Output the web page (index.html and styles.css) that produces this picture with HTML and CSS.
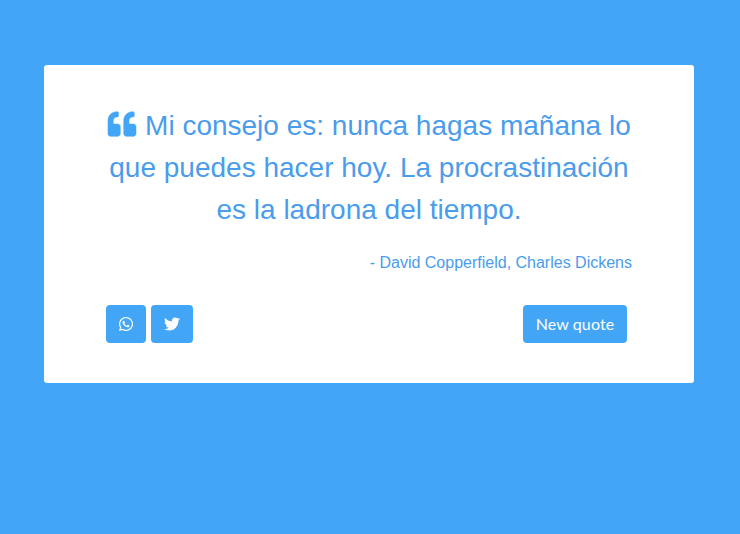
FILE: index.html
```html
<!DOCTYPE html>
<html lang="es">
<head>
<meta charset="utf-8">
<title>Random quote</title>
<link rel="stylesheet" href="styles.css">
</head>
<body>
<main class="card">
  <p class="quote"><svg class="quote-icon" viewBox="0 0 512 512" aria-hidden="true"><path d="M464 256h-80v-64c0-35.3 28.7-64 64-64h8c13.3 0 24-10.7 24-24V56c0-13.3-10.7-24-24-24h-8c-88.4 0-160 71.6-160 160v240c0 26.5 21.5 48 48 48h128c26.5 0 48-21.5 48-48V304c0-26.5-21.5-48-48-48zm-288 0H96v-64c0-35.3 28.7-64 64-64h8c13.3 0 24-10.7 24-24V56c0-13.3-10.7-24-24-24h-8C71.6 32 0 103.6 0 192v240c0 26.5 21.5 48 48 48h128c26.5 0 48-21.5 48-48V304c0-26.5-21.5-48-48-48z"/></svg> Mi consejo es: nunca hagas mañana lo que puedes hacer hoy. La procrastinación es la ladrona del tiempo.</p>
  <p class="author">- David Copperfield, Charles Dickens</p>
  <div class="actions">
    <div class="share">
      <a class="btn btn-wa" href="#" aria-label="WhatsApp"><svg class="icon-wa" viewBox="0 0 448 512" aria-hidden="true"><path d="M380.9 97.1C339 55.1 283.2 32 223.9 32c-122.4 0-222 99.6-222 222 0 39.1 10.2 77.3 29.6 111L0 480l117.7-30.9c32.4 17.7 68.9 27 106.1 27h.1c122.3 0 224.1-99.6 224.1-222 0-59.3-25.2-115-67.1-157zm-157 341.6c-33.2 0-65.7-8.9-94-25.7l-6.7-4-69.8 18.3L72 359.2l-4.4-7c-18.5-29.4-28.2-63.3-28.2-98.2 0-101.7 82.8-184.5 184.6-184.5 49.3 0 95.6 19.2 130.4 54.1 34.8 34.9 56.2 81.2 56.1 130.5 0 101.8-84.9 184.6-186.6 184.6zm101.2-138.2c-5.5-2.8-32.8-16.2-37.9-18-5.1-1.9-8.8-2.8-12.5 2.8-3.7 5.6-14.3 18-17.6 21.8-3.2 3.7-6.5 4.2-12 1.4-32.6-16.3-54-29.1-75.5-66-5.7-9.8 5.7-9.1 16.3-30.3 1.8-3.7.9-6.9-.5-9.7-1.4-2.8-12.5-30.1-17.1-41.2-4.5-10.8-9.1-9.3-12.5-9.5-3.2-.2-6.9-.2-10.6-.2-3.7 0-9.7 1.4-14.8 6.9-5.1 5.6-19.4 19-19.4 46.3 0 27.3 19.9 53.7 22.6 57.4 2.8 3.7 39.1 59.7 94.8 83.8 35.2 15.2 49 16.5 66.6 13.9 10.7-1.6 32.8-13.4 37.4-26.4 4.6-13 4.6-24.1 3.2-26.4-1.3-2.5-5-3.9-10.5-6.6z"/></svg></a>
      <a class="btn btn-tw" href="#" aria-label="Twitter"><svg class="icon-tw" viewBox="0 0 512 512" aria-hidden="true"><path d="M459.37 151.716c.325 4.548.325 9.097.325 13.645 0 138.72-105.583 298.558-298.558 298.558-59.452 0-114.68-17.219-161.137-47.106 8.447.974 16.568 1.299 25.34 1.299 49.055 0 94.213-16.568 130.274-44.832-46.132-.975-84.792-31.188-98.112-72.772 6.498.974 12.995 1.624 19.818 1.624 9.421 0 18.843-1.3 27.614-3.573-48.081-9.747-84.143-51.98-84.143-102.985v-1.299c13.969 7.797 30.214 12.67 47.431 13.319-28.264-18.843-46.781-51.005-46.781-87.391 0-19.492 5.197-37.36 14.294-52.954 51.655 63.675 129.3 105.258 216.365 109.807-1.624-7.797-2.599-15.918-2.599-24.04 0-57.828 46.782-104.934 104.934-104.934 30.213 0 57.502 12.67 76.67 33.137 23.715-4.548 46.456-13.32 66.599-25.34-7.798 24.366-24.366 44.833-46.132 57.827 21.117-2.273 41.584-8.122 60.426-16.243-14.292 20.791-32.161 39.308-52.628 54.253z"/></svg></a>
    </div>
    <button class="btn btn-new" type="button">New quote</button>
  </div>
</main>
</body>
</html>
```

FILE: styles.css
```css
html, body {
  margin: 0;
  height: 100%;
}

body {
  background: #42a5f5;
  padding-top: 65px;
  box-sizing: border-box;
  font-family: "Liberation Sans", Arial, sans-serif;
}

.card {
  width: 650px;
  margin-left: 44px;
  box-sizing: border-box;
  padding: 40px 62px;
  background: #fff;
  border-radius: 3px;
}

.quote {
  margin: 0;
  font-size: 28px;
  line-height: 42px;
  text-align: center;
  color: #4a9cec;
}

.quote-icon {
  width: 30px;
  height: 28px;
  fill: #42a5f5;
  stroke: #42a5f5;
  stroke-width: 10;
  vertical-align: -3px;
}

.author {
  margin: 20px 0 0;
  font-size: 16px;
  line-height: 24px;
  text-align: right;
  color: #4a9cec;
}

.actions {
  display: flex;
  justify-content: space-between;
  margin-top: 30px;
  padding-right: 5px;
}

.share {
  display: flex;
  gap: 5px;
}

.btn {
  display: flex;
  align-items: center;
  justify-content: center;
  height: 38px;
  box-sizing: border-box;
  border: 0;
  padding: 0;
  border-radius: 4px;
  background: #42a5f5;
  color: #fff;
}

.btn svg {
  fill: #fff;
  display: block;
}

.btn-wa {
  width: 40px;
}

.icon-wa {
  width: 14px;
  height: 16px;
}

.btn-tw {
  width: 42px;
}

.icon-tw {
  width: 16px;
  height: 16px;
}

.btn-new {
  width: 104px;
  padding-bottom: 2px;
  font-family: Lato, sans-serif;
  font-size: 16px;
  letter-spacing: 0.1px;
}
```
